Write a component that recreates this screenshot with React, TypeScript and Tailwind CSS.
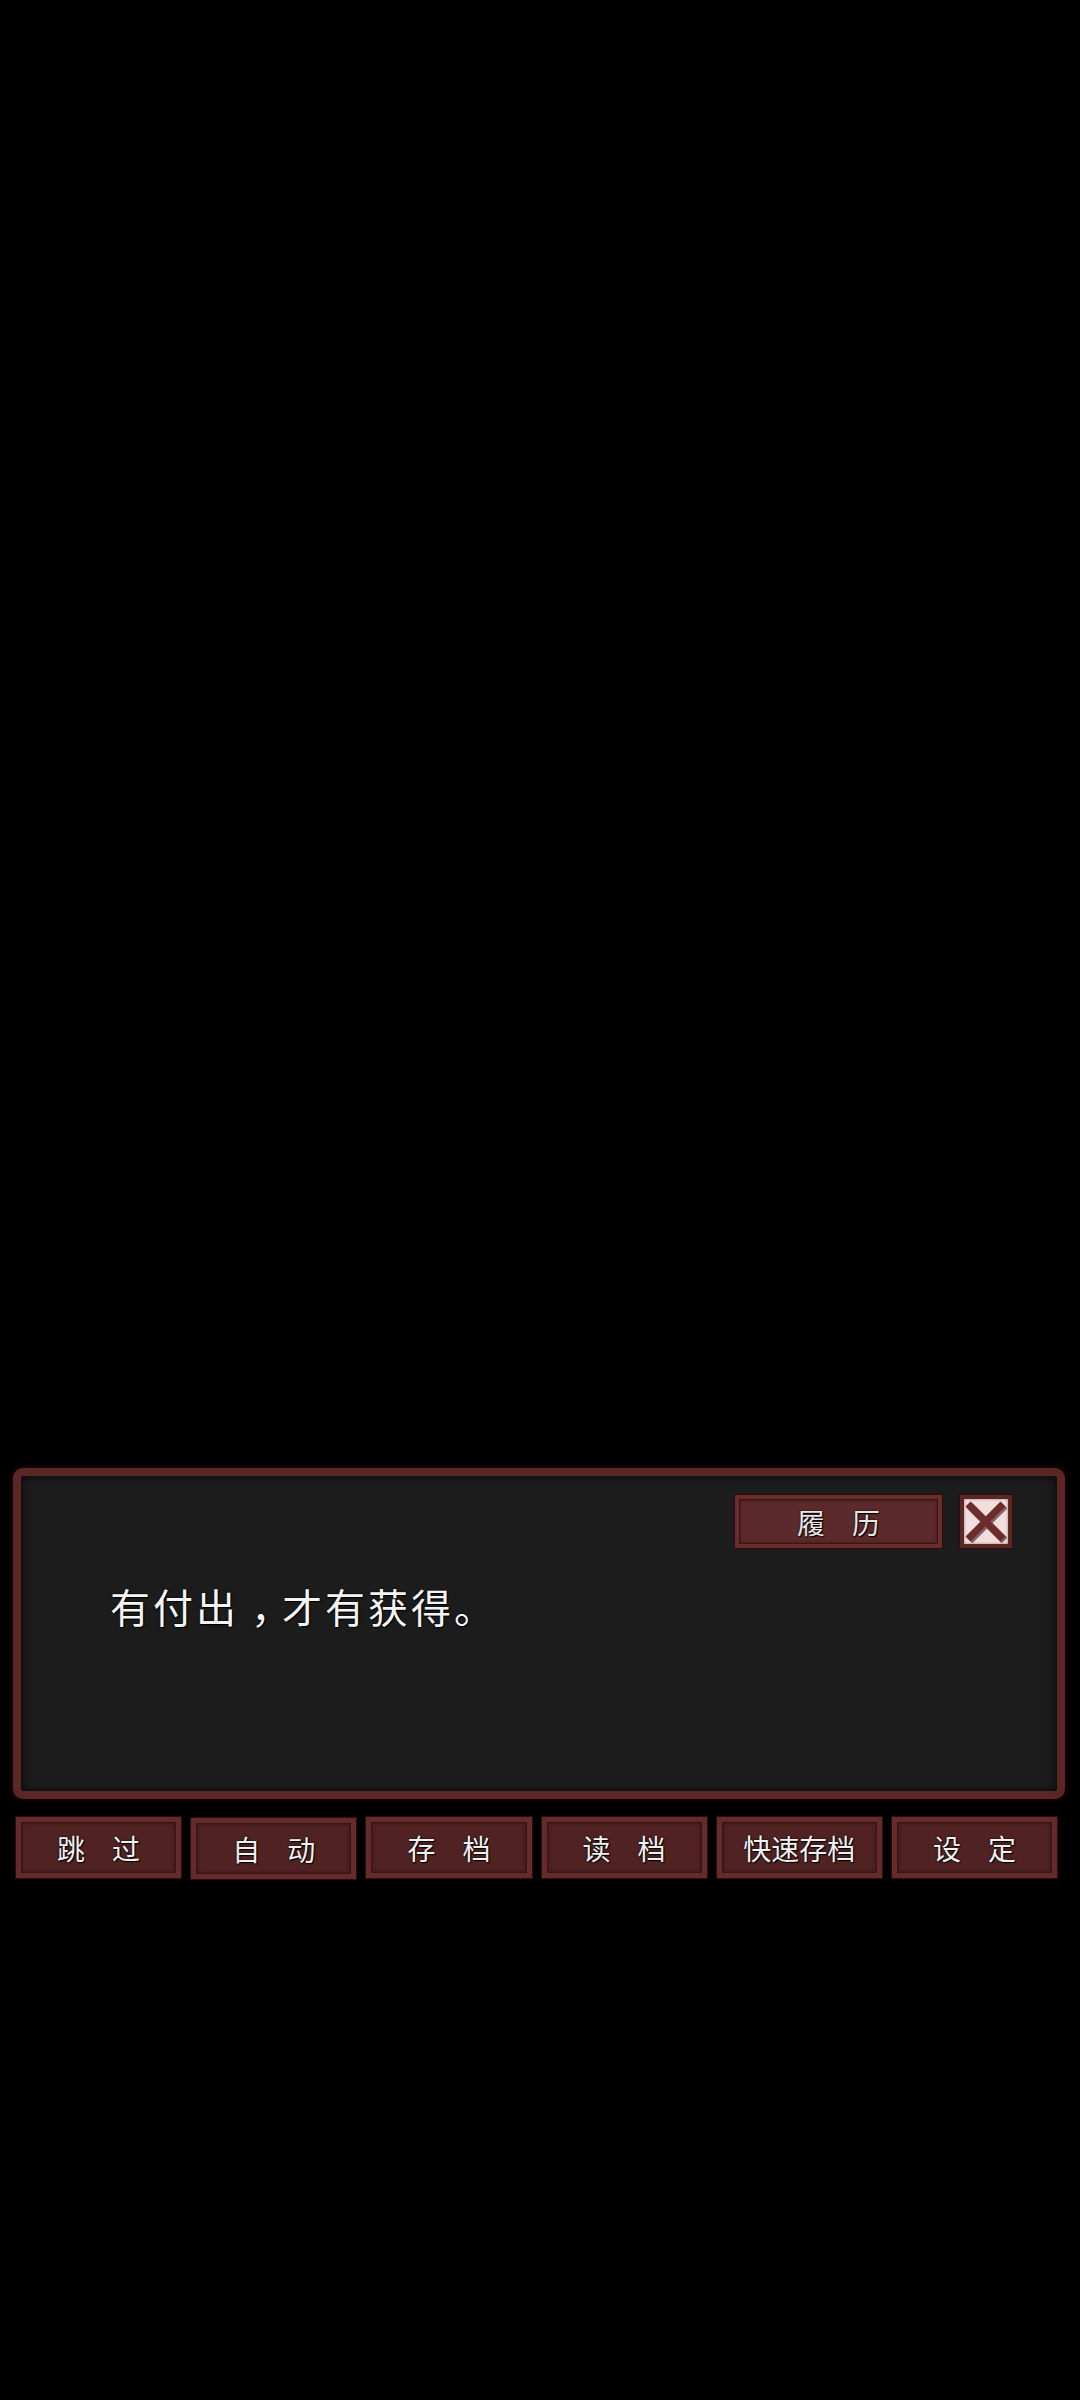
const font = { fontFamily: '"Noto Sans CJK SC", "Noto Sans", sans-serif' }

function MenuButton({ label, pressed }: { label: string; pressed?: boolean }) {
  const chars = label.length === 2 ? label.split('') : [label]
  return (
    <button
      className={
        'h-[61px] flex items-center justify-center gap-[27px] bg-[#502222] border-[5px] border-[#662a2a] shadow-[0_0_0_1px_#2a0c0c,inset_0_0_0_1px_#3a1414,inset_0_0_4px_rgba(0,0,0,0.7)] text-[28px] leading-none text-[#f0f0f0] [text-shadow:1px_1px_1px_#000,0_0_2px_#000] ' +
        (pressed ? 'mt-[1px]' : '')
      }
    >
      {chars.map((c, i) => (
        <span key={i}>{c}</span>
      ))}
    </button>
  )
}

export default function App() {
  const buttons = ['跳过', '自动', '存档', '读档', '快速存档', '设定']

  return (
    <div className="min-h-[2400px] bg-black pt-[1468px]" style={font}>
      <div className="ml-[13px] w-[1052px] h-[331px] rounded-[10px] border-[8px] border-[#5a2626] bg-[#1c1c1c] shadow-[0_0_4px_2px_#1a0505,inset_0_0_10px_rgba(0,0,0,0.85)]">
        <div className="flex justify-end items-center gap-[18px] pt-[19px] pr-[45px]">
          <button className="w-[207px] h-[53px] flex items-center justify-center gap-[27px] bg-[#5c2a2a] border-[4px] border-[#6a2c2c] shadow-[0_0_0_1px_#2a0c0c,inset_0_0_0_1px_#3a1414,inset_0_0_4px_rgba(0,0,0,0.6)] text-[28px] leading-none text-[#e6e6e6] [text-shadow:1px_1px_1px_#000,0_0_2px_#000]">
            <span>履</span>
            <span>历</span>
          </button>
          <button className="w-[52px] h-[53px] flex items-center justify-center bg-[#f3dede] border-[4px] border-[#5e2525] shadow-[0_0_0_1px_#2a0c0c,inset_0_0_3px_rgba(0,0,0,0.4)]">
            <svg width="42" height="42" viewBox="0 0 42 42">
              <g stroke="#3a1212" strokeWidth="8" strokeLinecap="butt" transform="translate(1.5,1.5)" opacity="0.6">
                <line x1="3" y1="3" x2="38" y2="38" />
                <line x1="38" y1="3" x2="3" y2="38" />
              </g>
              <g stroke="#6e2b2b" strokeWidth="7" strokeLinecap="butt">
                <line x1="3" y1="3" x2="38" y2="38" />
                <line x1="38" y1="3" x2="3" y2="38" />
              </g>
            </svg>
          </button>
        </div>
        <p className="mt-[38px] pl-[89px] text-[40px] leading-[40px] tracking-[3px] text-[#f4f4f4] [text-shadow:0_0_2px_#000,1px_1px_1px_#000]">
          有付出<span className="inline-block pl-[12px] pr-[8px] [font-feature-settings:'halt']">，</span>才有获得。
        </p>
      </div>

      <div className="ml-[16px] mt-[18px] w-[1041px] grid grid-cols-6 gap-[10px] items-start">
        {buttons.map((b, i) => (
          <MenuButton key={b} label={b} pressed={i === 1} />
        ))}
      </div>
    </div>
  )
}
